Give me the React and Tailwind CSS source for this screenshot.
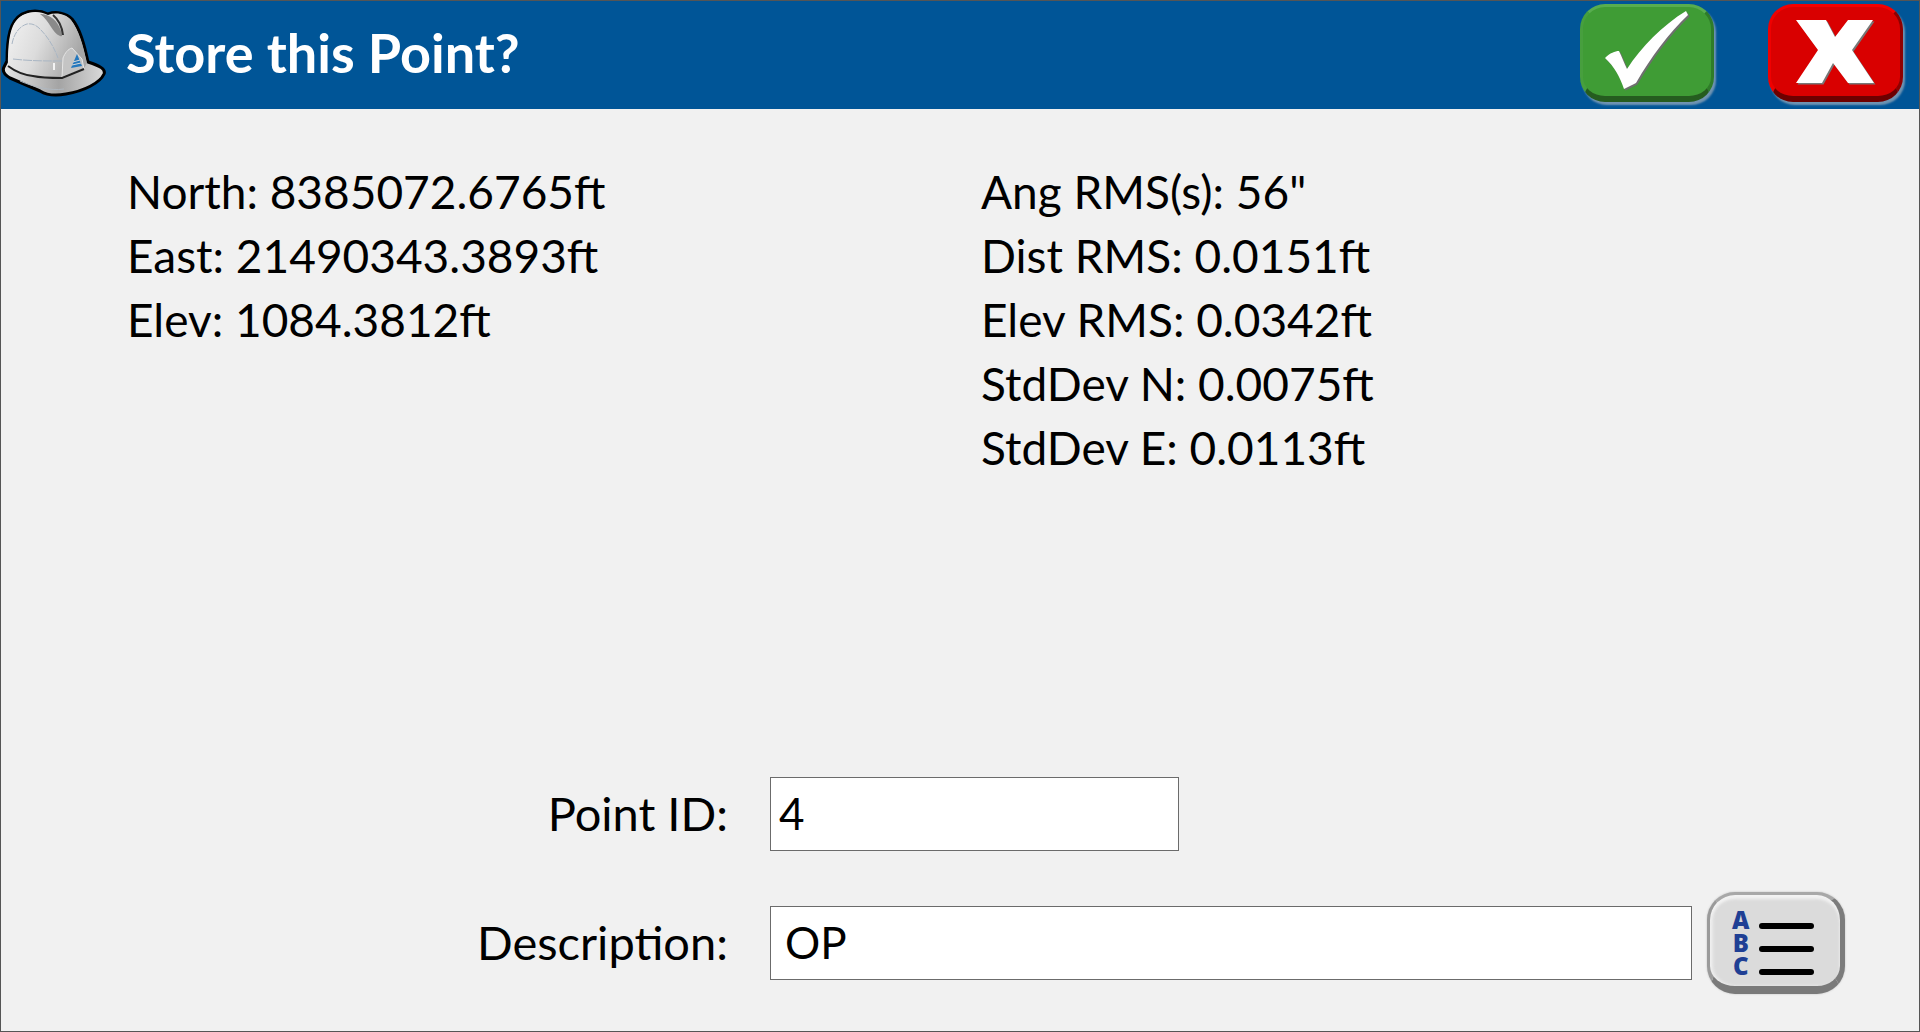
import React from 'react';

const leftRows = ['North: 8385072.6765ft', 'East: 21490343.3893ft', 'Elev: 1084.3812ft'];
const rightRows = ['Ang RMS(s): 56"', 'Dist RMS: 0.0151ft', 'Elev RMS: 0.0342ft', 'StdDev N: 0.0075ft', 'StdDev E: 0.0113ft'];

const HardHat = () => (
  <svg width="106" height="106" viewBox="1 1 106 106" className="shrink-0">
    <defs>
      <linearGradient id="shell" x1="0" y1="0" x2="1" y2="0.35">
        <stop offset="0" stopColor="#f4f4f4" />
        <stop offset="0.5" stopColor="#dcdcdc" />
        <stop offset="1" stopColor="#a6a6a6" />
      </linearGradient>
      <linearGradient id="brim" x1="0" y1="0" x2="1" y2="0">
        <stop offset="0" stopColor="#e6e6e6" />
        <stop offset="0.55" stopColor="#a4a4a4" />
        <stop offset="1" stopColor="#dadada" />
      </linearGradient>
    </defs>
    <path d="M4 66 C2 70 5 74 10 77 L40 90 C48 95 56 95 66 93 C84 90 100 82 104 73 C106 68 100 65 88 61 C84 42 80 28 72 18 C66 12 56 10 48 13 C40 9 30 9 22 13 C10 20 7 36 7 60 Z" fill="url(#brim)" stroke="#000" strokeWidth="3" strokeLinejoin="round" />
    <path d="M8 64 C8 36 11 20 23 14 C31 10 40 10 48 14 C56 11 66 13 71 19 C79 29 83 44 87 62 L83 69 L62 77 C42 78 22 75 8 66 Z" fill="url(#shell)" />
    <path d="M40 13 C50 13 58 20 61 30 C63 35 62 36 60 35 C52 32 50 20 40 13 Z" fill="#8a8a8a" />
    <path d="M53 14 C59 19 62 26 63 34" fill="none" stroke="#333" strokeWidth="2" />
    <path d="M12 43 C14 32 20 25 27 23 C33 22 37 25 40 28 C48 36 54 46 58 57" fill="none" stroke="#a9b6c4" strokeWidth="1" strokeDasharray="6 1" />
    <path d="M13 58 C30 60 46 60 63 60" fill="none" stroke="#a9b6c4" strokeWidth="1" strokeDasharray="9 1" />
    <path d="M62 76 L63 57 C65 52 68 48 72 47 L82 58 L84 68 Z" fill="#c4c4c4" stroke="#e6e6e6" strokeWidth="1" />
    <path d="M77 53 L71 67 L82 65 Z" fill="#2578bd" />
    <path d="M73 61 L80 59 M72 64 L81 62" stroke="#d8d8d8" strokeWidth="1" />
    <path d="M8 65 C16 71 24 74 33 75 C42 77 52 77 62 77 L84 68" fill="none" stroke="#222" strokeWidth="2" />
    <path d="M20 80 C34 86 50 90 64 88" fill="none" stroke="#b0b8c0" strokeWidth="1" />
    <path d="M54 62 L54 69" stroke="#f4f4f4" strokeWidth="2" />
  </svg>
);

const checkPath = 'M0 47 C5 42 10 40 14 40 C17 46 19 52 22 58 C36 36 58 14 81 0 L83 4 C64 22 46 46 31 72 L19 78 C15 66 9 55 0 47 Z';
const crossPath = 'M0 0 L30 0 L39 17 L52 0 L77 0 L56 30 L78 63 L52 63 L37 43 L26 63 L0 63 L22 30 Z';

const CheckMark = () => (
  <svg width="86" height="81" viewBox="0 0 86 81">
    <path d={checkPath} fill="#6f6f6f" transform="translate(1.5 1.5)" />
    <path d={checkPath} fill="#fff" />
  </svg>
);

const CrossMark = () => (
  <svg width="80" height="66" viewBox="0 0 80 66">
    <path d={crossPath} fill="#777" transform="translate(1.5 1.5)" />
    <path d={crossPath} fill="#fff" />
  </svg>
);

const AbcList = () => (
  <div className="flex items-center gap-[10px] pl-[22px] pt-[4px]">
    <div className="w-min text-center font-['Open_Sans',sans-serif] font-extrabold text-[24px] leading-[23px] text-[#1f3f94]">A B C</div>
    <div className="flex flex-col gap-[17px] mt-[12px]">
      <div className="w-[55px] h-[6px] rounded-full bg-black" />
      <div className="w-[55px] h-[6px] rounded-full bg-black" />
      <div className="w-[55px] h-[6px] rounded-full bg-black" />
    </div>
  </div>
);

export default function App() {
  return (
    <div className="w-[1920px] h-[1032px] flex flex-col overflow-hidden border border-[#555] bg-[#f1f1f1] font-['Lato',sans-serif] text-[46px] leading-[64px] text-black">
      <header className="h-[108px] shrink-0 flex items-center bg-[#005597] pr-[16px]">
        <HardHat />
        <h1 className="ml-[19px] mb-[5px] text-[54px] font-bold text-white">Store this Point?</h1>
        <button className="ml-auto mb-[4px] w-[134px] h-[98px] flex items-center justify-center rounded-[25px] bg-[#3f9c35] border-t-[3px] border-x-[3px] border-b-[6px] border-t-[#58ad4f] border-l-[#479f3e] border-r-[#2f7c29] border-b-[#255c1f] shadow-[2px_3px_2px_rgba(160,175,190,0.7)]">
          <div className="ml-[2px]"><CheckMark /></div>
        </button>
        <button className="ml-[54px] mb-[4px] w-[135px] h-[98px] flex items-center justify-center rounded-[25px] bg-[#d90000] border-t-[3px] border-x-[3px] border-b-[6px] border-t-[#f50000] border-l-[#f00000] border-r-[#8e0000] border-b-[#6d0000] shadow-[2px_3px_2px_rgba(160,175,190,0.7)]">
          <div className="mt-[3px]"><CrossMark /></div>
        </button>
      </header>

      <main className="flex-1 flex flex-col">
        <div className="flex pl-[126px] pt-[51px] h-[668px] shrink-0">
          <div className="w-[854px]">
            {leftRows.map((row) => <div key={row}>{row}</div>)}
          </div>
          <div>
            {rightRows.map((row) => <div key={row}>{row}</div>)}
          </div>
        </div>

        <div className="flex items-center h-[74px]">
          <label className="w-[727px] pb-[2px] text-right text-[47px]">Point ID:</label>
          <div className="ml-[42px] w-[409px] h-[74px] pl-[8px] pb-[2px] flex items-center text-[44px] bg-white border border-[#6b6b6b]">4</div>
        </div>

        <div className="flex items-center h-[74px] mt-[55px]">
          <label className="w-[727px] pb-[2px] text-right text-[47px]">Description:</label>
          <div className="ml-[42px] w-[922px] h-[74px] pl-[14px] pb-[2px] flex items-center text-[44px] bg-white border border-[#6b6b6b]">OP</div>
          <button className="ml-[15px] w-[138px] h-[102px] flex items-center rounded-[28px] bg-[#dbdbdb] border-t-[3px] border-l-[3px] border-r-[5px] border-b-[8px] border-t-[#a8a8a8] border-l-[#9a9a9a] border-r-[#7c7c7c] border-b-[#7a7a7a] shadow-[0_0_2px_#bbb,inset_0_4px_3px_#f2f2f2,inset_3px_0_3px_#ececec]">
            <AbcList />
          </button>
        </div>
      </main>
    </div>
  );
}
